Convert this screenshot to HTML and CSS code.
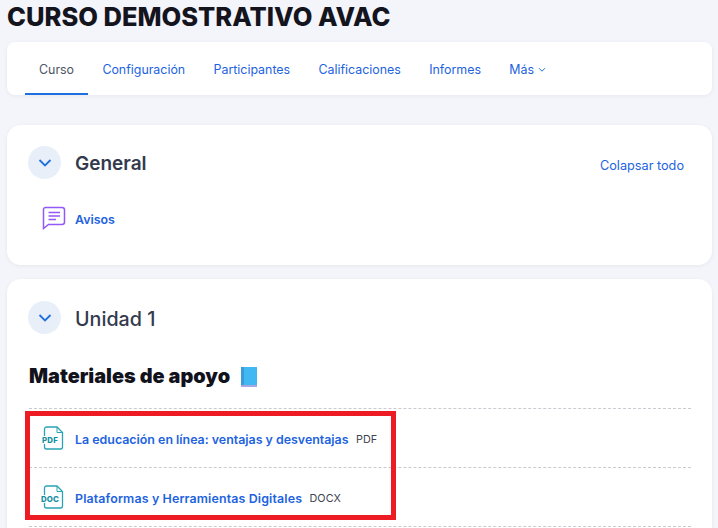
FILE: index.html
```html
<!DOCTYPE html>
<html lang="es">
<head>
<meta charset="utf-8">
<title>Curso demostrativo AVAC</title>
<link rel="stylesheet" href="styles.css">
</head>
<body>
<h1 class="title">CURSO DEMOSTRATIVO AVAC</h1>
<nav class="tabs card-sm">
  <a class="tab active">Curso</a>
  <a class="tab">Configuración</a>
  <a class="tab">Participantes</a>
  <a class="tab">Calificaciones</a>
  <a class="tab">Informes</a>
  <a class="tab">Más<svg class="caret" viewBox="0 0 8 6" width="8" height="6"><path d="M1 1.200 4 4.200 7 1.200" fill="none" stroke="#1f6fe0" stroke-width="1"/></svg></a>
</nav>
<section class="card general">
  <header class="sec-head">
    <span class="toggle"><svg viewBox="0 0 14 10" width="14" height="10"><path d="M1.500 2 7 7.500 12.500 2" fill="none" stroke="#1f6fe0" stroke-width="1.800"/></svg></span>
    <h2 class="sec-title">General</h2>
    <a class="collapse">Colapsar todo</a>
  </header>
  <div class="activity forum">
    <svg class="ic" viewBox="0 0 24 24" width="24" height="24" fill="none" stroke="#9358f7" stroke-width="1.500"><path d="M3.500 1.500H20a2.500 2.500 0 0 1 2.500 2.500V16a2.500 2.500 0 0 1-2.500 2.500H6.500L1.500 22.500V3.500a2 2 0 0 1 2-2Z"/><path d="M6.500 6.500H18M6.500 10H18M6.500 13.500H14"/></svg>
    <a class="act-link">Avisos</a>
  </div>
</section>
<section class="card unit">
  <header class="sec-head">
    <span class="toggle"><svg viewBox="0 0 14 10" width="14" height="10"><path d="M1.500 2 7 7.500 12.500 2" fill="none" stroke="#1f6fe0" stroke-width="1.800"/></svg></span>
    <h2 class="sec-title unit-title">Unidad 1</h2>
  </header>
  <h3 class="label">Materiales de apoyo <span class="book"></span></h3>
  <div class="list">
    <div class="row">
      <svg class="file" viewBox="0 0 24 24" width="24" height="24" fill="none"><path d="M3.500 10V3a2 2 0 0 1 2-2h10.500l5.500 5.500V21a2 2 0 0 1-2 2h-14a2 2 0 0 1-2-2v-3" stroke="#2aa3b5" stroke-width="1.300"/><path d="M16 1v5.500h5.500" stroke="#2aa3b5" stroke-width="1"/><text x="9" y="17" class="file-tx">PDF</text></svg>
      <a class="act-link">La educación en línea: ventajas y desventajas</a>
      <span class="type">PDF</span>
    </div>
    <div class="row">
      <svg class="file" viewBox="0 0 24 24" width="24" height="24" fill="none"><path d="M3.500 10V3a2 2 0 0 1 2-2h10.500l5.500 5.500V21a2 2 0 0 1-2 2h-14a2 2 0 0 1-2-2v-3" stroke="#2aa3b5" stroke-width="1.300"/><path d="M16 1v5.500h5.500" stroke="#2aa3b5" stroke-width="1"/><text x="9" y="17" class="file-tx">DOC</text></svg>
      <a class="act-link wide">Plataformas y Herramientas Digitales</a>
      <span class="type">DOCX</span>
    </div>
    <div class="highlight"></div>
  </div>
</section>
</body>
</html>
```
FILE: styles.css
```css
* { box-sizing: border-box; }
html, body { height: 100%; }
body {
  margin: 0;
  padding: 0 6px 0 7px;
  background: #f4f5fa;
  font-family: Inter, "Noto Sans", sans-serif;
  overflow: hidden;
  color: #1d2125;
}
.title {
  margin: 0;
  height: 42px;
  padding-top: 1px;
  font-size: 25.500px;
  line-height: 32px;
  font-weight: 800;
  color: #14141f;
}
.card-sm, .card {
  background: #fff;
  box-shadow: 0 1px 4px rgba(30, 40, 80, .06);
}
.tabs {
  display: flex;
  height: 53px;
  padding-left: 18px;
  border-radius: 8px;
  margin-bottom: 30px;
}
.tab {
  display: flex;
  align-items: center;
  gap: 4px;
  height: 53px;
  padding: 4px 14.200px 0;
  font-size: 12.400px;
  color: #1d63e0;
  border-bottom: 2px solid transparent;
}
.tab:first-child { padding-left: 14px; }
.tab.active {
  color: #4b5563;
  border-bottom-color: #1f6fe0;
}
.card {
  border-radius: 14px;
  padding: 21px 21px 0;
}
.general {
  height: 140px;
  margin-bottom: 14px;
}
.unit {
  height: 300px;
  padding-top: 22px;
}
.sec-head {
  display: flex;
  align-items: center;
  gap: 14px;
  height: 33px;
}
.toggle {
  display: flex;
  align-items: center;
  justify-content: center;
  width: 33px;
  height: 33px;
  border-radius: 50%;
  background: #e8eff9;
}
.sec-title {
  margin: 0;
  flex: 1;
  padding-top: 2px;
  font-size: 19px;
  font-weight: 600;
  color: #333a4d;
}
.unit-title {
  font-size: 19.700px;
  font-weight: 500;
}
.collapse {
  padding-top: 5px;
  font-size: 12.700px;
  color: #1d63e0;
  margin-right: 7px;
}
.activity {
  display: flex;
  align-items: center;
}
.forum {
  margin-top: 27px;
  padding-left: 14px;
  gap: 9px;
}
.act-link {
  padding-top: 2px;
  font-size: 12.400px;
  font-weight: 600;
  color: #1d63e0;
}
.wide { letter-spacing: .14px; }
.label {
  margin: 30px 0 0 1px;
  height: 44px;
  font-size: 19.900px;
  line-height: 24px;
  font-weight: 900;
  color: #12121c;
}
.book {
  display: inline-block;
  width: 16px;
  height: 20px;
  margin-left: 7px;
  vertical-align: -4px;
  background: linear-gradient(90deg, #3a9bd6 0 3px, #41b8f2 3px);
  border-bottom: 2px solid #a9a6e4;
}
.list {
  position: relative;
  margin: 0 0 0 1px;
  border-top: 1px dashed #c9cbd1;
}
.row {
  display: flex;
  align-items: center;
  height: 59px;
  padding-left: 12px;
  border-bottom: 1px dashed #c9cbd1;
}
.file { margin-right: 10px; flex: none; }
.file-tx {
  font-family: Inter, sans-serif;
  font-size: 7.800px;
  font-weight: 800;
  fill: #14909f;
  text-anchor: middle;
  letter-spacing: .2px;
}
.type {
  margin-left: 7.500px;
  padding-top: 2px;
  font-size: 10.800px;
  color: #3d4350;
}
.highlight {
  position: absolute;
  left: -4px;
  top: 2px;
  width: 371px;
  height: 109px;
  border: 5px solid #ed1c24;
  pointer-events: none;
}
```
